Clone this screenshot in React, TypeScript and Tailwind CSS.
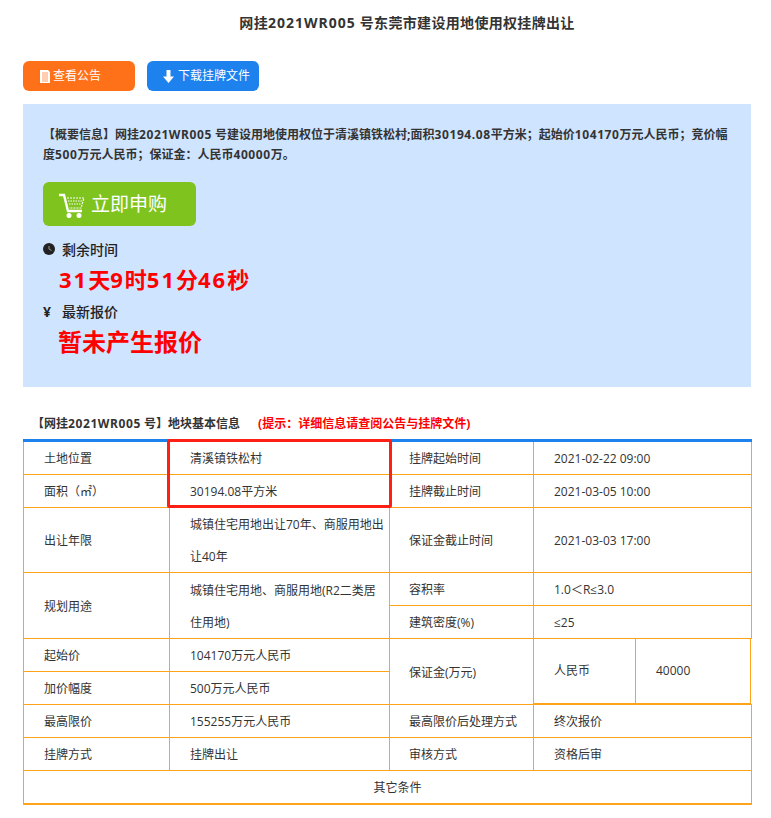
import React from "react";

const b = "border border-[#ffa31a]";
const bold = "font-bold font-['Noto_Sans','Noto_Sans_CJK_SC',sans-serif]";
const L = ({ children, rowSpan, className = "" }: any) => (
  <td rowSpan={rowSpan} className={`${b} pl-5 pt-[2px] align-middle ${className}`}>{children}</td>
);
const M = ({ children, rowSpan }: any) => (
  <td rowSpan={rowSpan} className={`${b} pl-5 pr-1 align-middle leading-8`}><div className="translate-y-px">{children}</div></td>
);
const N = ({ children }: any) => <span className="tracking-[0.6px]">{children}</span>;
const C = "!pl-[19px]";

export default function App() {
  return (
    <div className="w-[771px] h-[818px] bg-white text-[12px] text-[#333] overflow-hidden font-['Open_Sans','Noto_Sans_CJK_SC',sans-serif]">
      <h1 className={`pl-[43px] pt-[13px] h-[61px] text-center text-[14px] leading-[19px] tracking-[0.33px] ${bold}`}>网挂<span className="tracking-[1px]">2021WR005</span> 号东莞市建设用地使用权挂牌出让</h1>
      <div className="flex gap-3 pl-[23px]">
        <a className="flex items-center w-[112px] h-[30px] pl-[17px] rounded-md bg-[#ff7119] text-white">
          <svg width="10" height="13" viewBox="0 0 10 13" className="mr-[3px]"><path d="M0 0h8l2 2v11H0z" fill="#fff" /><path d="M2 3h6M2 5h6M2 7h6M2 9h6M2 11h6" stroke="#ff9d63" strokeWidth="1" /></svg>
          查看公告
        </a>
        <a className="flex items-center w-[112px] h-[30px] pl-4 rounded-md bg-[#1e82ee] text-white">
          <svg width="11" height="13" viewBox="0 0 11 13" className="mr-[4px]"><path d="M3.5 0h4v6.5H11L5.5 13 0 6.5h3.5z" fill="#fff" /></svg>
          下载挂牌文件
        </a>
      </div>
      <section className={`mx-[23px] mt-[13px] w-[728px] h-[283px] bg-[#cfe4ff] px-5 pt-[21px] ${bold}`}>
        <p className="leading-5 text-[12px]">【概要信息】网挂<N>2021WR005</N> 号建设用地使用权位于清溪镇铁松村;面积<N>30194.08</N>平方米；起始价<N>104170</N>万元人民币；竞价幅度<N>500</N>万元人民币；保证金：人民币<N>40000</N>万。</p>
        <button className="flex items-center mt-[17px] w-[153px] h-[44px] pl-[15px] pt-px rounded-md bg-[#7fc31f] text-white text-[19px] font-normal">
          <svg width="28" height="26" viewBox="0 0 28 26" className="mr-[5px]" fill="none">
            <path d="M1 3h5l4 16h14" stroke="#fff" strokeWidth="2.4" />
            <path d="M9 6h17l-3 10H11" stroke="#fff" strokeWidth="1.2" strokeDasharray="2 1" />
            <path d="M10 9h14M11 12h12" stroke="#fff" strokeWidth="1" strokeDasharray="1.5 1" />
            <circle cx="11" cy="23.5" r="2.5" fill="#fff" /><circle cx="21" cy="23.5" r="2.5" fill="#fff" />
          </svg>
          立即申购
        </button>
        <div className="flex items-center mt-[13px] h-5 text-[14px] font-medium text-[#222]">
          <svg width="12" height="12" viewBox="0 0 12 12" className="mr-[7px]"><circle cx="6" cy="6" r="6" fill="#222" /><path d="M6 3v3l2.5 1.5" stroke="#9a9a9a" strokeWidth="1" fill="none" /></svg>
          剩余时间
        </div>
        <div className="pl-4 mt-[3px] text-[22px] leading-[34px] text-[#ff0000] tracking-[2px]">31<span className="tracking-normal">天</span>9<span className="tracking-normal">时</span>51<span className="tracking-normal">分</span>46<span className="tracking-normal">秒</span></div>
        <div className="flex items-center mt-[5px] h-5 text-[14px] font-medium text-[#222]"><span className="w-[19px] font-bold">¥</span>最新报价</div>
        <div className="pl-[15px] mt-[3px] text-[24px] leading-[36px] text-[#ff0000]">暂未产生报价</div>
      </section>
      <div className={`pl-[32px] mt-[27px] h-[25px] leading-[20px] ${bold}`}>
        【网挂<N>2021WR005</N> 号】地块基本信息<span className="ml-[18px] text-[#ff0000]">(提示：详细信息请查阅公告与挂牌文件)</span>
      </div>
      <div className="relative mx-[23px] w-[728px]">
        <table className="w-[728px] table-fixed border-collapse border-t-[3px] border-t-[#1e82ee] border-b-2 border-b-[#ffa31a]">
          <colgroup><col className="w-[146px]" /><col className="w-[220px]" /><col className="w-[144px]" /><col className="w-[218px]" /></colgroup>
          <tbody>
            <tr className="h-[34px]"><L>土地位置</L><L>清溪镇铁松村</L><L className={C}>挂牌起始时间</L><L>2021-02-22 09:00</L></tr>
            <tr className="h-[33px]"><L>面积（㎡）</L><L>30194.08平方米</L><L className={C}>挂牌截止时间</L><L>2021-03-05 10:00</L></tr>
            <tr className="h-[65px]"><L>出让年限</L><M>城镇住宅用地出让70年、商服用地出让40年</M><L className={C}>保证金截止时间</L><L>2021-03-03 17:00</L></tr>
            <tr className="h-[33px]"><L rowSpan={2}>规划用途</L><M rowSpan={2}>城镇住宅用地、商服用地(R2二类居住用地)</M><L className={C}>容积率</L><L>1.0＜R≤3.0</L></tr>
            <tr className="h-[33px]"><L className={C}>建筑密度(%)</L><L>≤25</L></tr>
            <tr className="h-[33px]"><L>起始价</L><L>104170万元人民币</L><L rowSpan={2} className={C}>保证金(万元)</L>
              <td rowSpan={2} className="p-0 border-t border-l border-t-[#ffa31a] border-l-[#ffa31a]">
                <div className="flex h-[65px] w-[217px] border-r border-b border-[#ffa31a]"><div className="w-[102px] pl-5 pt-[23px] border-r border-r-[#ffa31a]">人民币</div><div className="pl-5 pt-[23px]">40000</div></div>
              </td>
            </tr>
            <tr className="h-[33px]"><L>加价幅度</L><L>500万元人民币</L></tr>
            <tr className="h-[33px]"><L>最高限价</L><L>155255万元人民币</L><L className={C}>最高限价后处理方式</L><L>终次报价</L></tr>
            <tr className="h-[33px]"><L>挂牌方式</L><L>挂牌出让</L><L className={C}>审核方式</L><L>资格后审</L></tr>
            <tr className="h-[33px]"><td colSpan={4} className={`${b} pl-5 pt-[2px] text-center`}>其它条件</td></tr>
          </tbody>
        </table>
        <div className="absolute left-[144px] top-0 w-[225px] h-[69px] border-[3px] border-[#ff2015] rounded-[2px]" />
      </div>
    </div>
  );
}
